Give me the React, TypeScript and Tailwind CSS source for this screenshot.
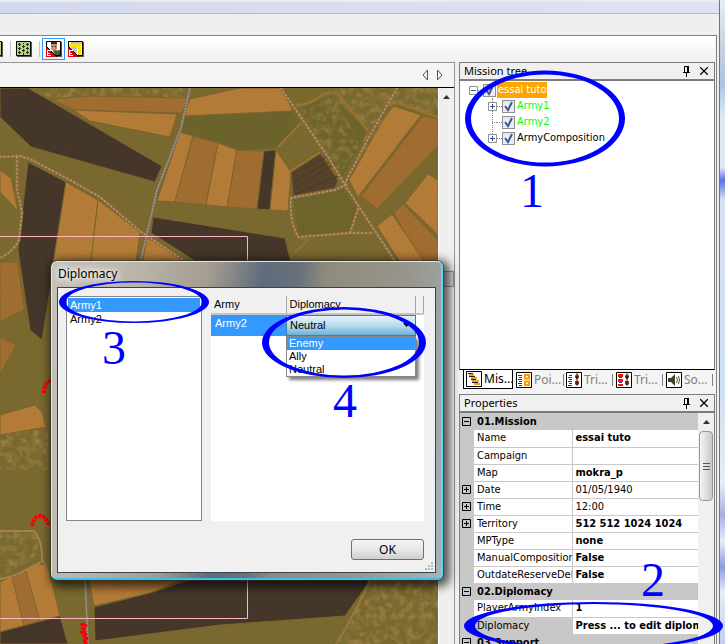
import type { ReactNode } from "react";
import { X } from "lucide-react";

const SANS = "font-['Noto_Sans','Open_Sans',sans-serif]";
const TAHOMA = "font-['DejaVu_Sans_Condensed','DejaVu_Sans',sans-serif] [font-stretch:condensed]";
const ARIAL = "font-['Liberation_Sans',Arial,sans-serif]";

type Row = {
  name: string;
  value?: string;
  group?: boolean;
  expandable?: boolean;
  plain?: boolean;
  active?: boolean;
};

const rows: Row[] = [
  { name: "01.Mission", group: true },
  { name: "Name", value: "essai tuto" },
  { name: "Campaign", value: "" },
  { name: "Map", value: "mokra_p" },
  { name: "Date", value: "01/05/1940", expandable: true, plain: true },
  { name: "Time", value: "12:00", expandable: true, plain: true },
  { name: "Territory", value: "512 512 1024 1024", expandable: true },
  { name: "MPType", value: "none" },
  { name: "ManualComposition", value: "False" },
  { name: "OutdateReserveDelay", value: "False" },
  { name: "02.Diplomacy", group: true },
  { name: "PlayerArmyIndex", value: "1" },
  { name: "Diplomacy", value: "Press ... to edit diplomacy", active: true },
  { name: "03.Support", group: true },
];

const BROWN = "#43352a";
const ORANGE = "#b67d39";
const OCHRE = "#a26e31";
const OLIVE = "#7a6a30";

const fields: [string, string][] = [
  ["0,88 28,88 162,166 155,182 31,147 0,117", BROWN],
  ["28,162 66,182 50,290 42,340 30,330 18,250", BROWN],
  ["52,99 90,96 188,98 182,113 73,110", OCHRE],
  ["73,110 177,114 170,137 90,121", ORANGE],
  ["190,99 240,88 282,88 293,111 183,116", ORANGE],
  ["180,132 193,136 175,202 157,201", ORANGE],
  ["193,136 218,143 206,205 175,202", OCHRE],
  ["218,143 237,150 227,207 206,205", ORANGE],
  ["237,150 264,151 257,209 227,207", OCHRE],
  ["264,151 276,150 270,210 257,209", BROWN],
  ["276,150 291,172 288,211 270,210", ORANGE],
  ["153,217 285,238 300,300 200,264 151,233", BROWN],
  ["66,182 98,200 90,270 52,270", ORANGE],
  ["98,200 140,232 135,270 90,270", ORANGE],
  ["147,238 185,258 180,270 141,270", ORANGE],
  ["0,170 11,178 18,211 0,192", ORANGE],
  ["0,262 18,262 24,310 0,322", OCHRE],
  ["291,171 320,153 338,180 335,188 293,196", "#54412a"],
  ["394,106 421,115 358,197 349,180 384,118", ORANGE],
  ["423,116 438,119 438,146 377,209 361,196", OCHRE],
  ["428,174 438,180 438,235 405,203", ORANGE],
  ["403,204 438,240 438,270 425,270 394,213", OCHRE],
  ["392,214 430,270 405,270 377,226", ORANGE],
  ["0,337 16,345 0,375", OCHRE],
  ["0,415 35,405 42,412 46,427 0,435", ORANGE],
  ["0,582 35,563 48,566 60,616 0,632", ORANGE],
  ["12,577 26,571 40,621 24,626", OCHRE],
  ["0,632 60,616 68,644 0,644", BROWN],
  ["88,575 195,575 150,593 94,606", ORANGE],
  ["94,607 150,593 195,578 372,578 345,616 220,625 95,641", BROWN],
];

function TerrainMap() {
  return (
    <svg
      className="absolute inset-0 size-full"
      viewBox="0 88 438 556"
      preserveAspectRatio="xMinYMin slice"
      role="img"
      aria-label="Terrain map"
    >
      <defs>
        <filter id="grain" x="0" y="0" width="100%" height="100%">
          <feTurbulence type="fractalNoise" baseFrequency="0.5" numOctaves="2" seed="4" />
          <feColorMatrix values="0 0 0 0 0.15  0 0 0 0 0.1  0 0 0 0 0.02  1.2 0 0 0 -0.45" />
        </filter>
        <filter id="leaves" x="0" y="0" width="100%" height="100%">
          <feTurbulence type="fractalNoise" baseFrequency="0.15" numOctaves="3" seed="9" />
          <feColorMatrix values="0 0 0 0 0.64  0 0 0 0 0.38  0 0 0 0 0.14  0 2 0 0 -0.8" result="n" />
          <feComposite in="n" in2="SourceGraphic" operator="in" />
        </filter>
      </defs>
      <rect y="88" width="438" height="556" fill={OLIVE} />
      <path d="M300 108l30-12 38 35-25 45-43-68zM293 197l50-8 14 20-8 22-50 6z" fill="#6d642c" />
      <g filter="url(#leaves)" opacity="0.45">
        <path d="M335 88h103v28l-42-12-30 52-32-60zM300 108l40 66 30-45-38-33zM372 578h66v66H336zM0 430h48v40H0z" />
        <path d="M28 88h155v10H50zM0 530h38v25L0 578z" />
      </g>
      <path d="M183 116l110-5 7 12-22 24-42 3-56-18z" fill="#6c642d" />
      {fields.map(([points, fill]) => (
        <polygon key={points} points={points} fill={fill} stroke="#7d652d" strokeWidth="1" />
      ))}
      <path
        d="M295 188l40-24M296 194l42-18M293 181l38-20M301 170l24-12"
        stroke="#473724"
        strokeWidth="1"
      />
      <g fill="none" strokeLinejoin="round" strokeLinecap="round">
        <path
          d="M297 105q12 0 22-8 12-8 20-2l29 36M278 147l22-23M291 171l28-18M398 103l40 14"
          stroke="#9a7431"
          strokeWidth="2.5"
        />
        <path
          d="M0 157l20-1 10 3 40 21 30 17 40 34 50 34M17 157v33l5 22-3 28q-6 12-19 18M281 88l49 72 15 25 22 34 32 48M397 88l-27 47-25 48M291 198l44-8 12-6M291 198q-2 22 7 39l52-4 22 0M358 209l-8 24M298 237l10 3-12 12"
          stroke="#8f6c3b"
          strokeWidth="3"
        />
        <path
          d="M0 157l20-1 10 3 40 21 30 17 40 34 50 34M17 157v33l5 22-3 28q-6 12-19 18M281 88l49 72 15 25 22 34 32 48M397 88l-27 47-25 48M291 198l44-8 12-6M291 198q-2 22 7 39l52-4 22 0M358 209l-8 24"
          stroke="#c0987a"
          strokeWidth="1.5"
          strokeDasharray="1 3"
        />
        <path d="M190 88l-9 40-24 62-17 74M85 578l3 66" stroke="#7b6c56" strokeWidth="3" />
        <path d="M190 88l-9 40-24 62-17 74M85 578l3 66" stroke="#a3998e" strokeWidth="1.5" strokeDasharray="1 2" />
        <path
          d="M0 531l34 0q8 8 8 28l6 12M42 561q-20 14-42 18M370 580q-16 36-34 64"
          stroke="#9d7744"
          strokeWidth="2"
        />
        <path d="M0 531l34 0q8 8 8 28M42 561q-20 14-42 18" stroke="#c39b75" strokeDasharray="1 2" />
      </g>
      <rect y="88" width="438" height="556" filter="url(#grain)" opacity="0.25" />
      <path d="M0 236.5h247.5v382H0" fill="none" stroke="#ffb6c1" />
      <g fill="none" stroke="#f00" strokeWidth="4" strokeDasharray="3 1">
        <path d="M44 393q0-8 4-11l6-3M32 526q2-10 8-10 5 0 8 7l6 0M82 623l4 21M86 624l-4 8 5 4-3 8" />
      </g>
    </svg>
  );
}

function ForestIcon() {
  return (
    <svg width="16" height="16" viewBox="0 0 16 16" aria-hidden="true">
      <path d="M1 1h15v15H1z" fill="#555" />
      <path d="M.5.5h14v14H.5z" fill="#b9cf8b" stroke="#000" />
      <path
        d="M3 2h1v3H3zM2 3h3v1H2zM7 4h1v3H7zM6 5h3v1H6zM11 2h1v3h-1zM10 3h3v1h-3zM3 6h1v3H3zM2 7h3v1H2zM11 6h1v3h-1zM10 7h3v1h-3zM7 8h1v3H7zM6 9h3v1H6zM3 10h1v3H3zM2 11h3v1H2zM11 10h1v3h-1zM10 11h3v1h-3zM7 12h1v2H7zM7 2h1v1H7z"
        fill="#21330f"
      />
    </svg>
  );
}

function EditorIcon({ road = false }: { road?: boolean }) {
  return (
    <svg width="16" height="16" viewBox="0 0 16 16" aria-hidden="true">
      <path d="M1 1h15v15H1z" fill="#555" />
      <path d="M.5.5h14v14H.5z" fill="#fff" stroke="#000" />
      {road ? (
        <>
          <path d="M3 1h11v2H3zM3 6h6v6H3z" fill="#c4c4c4" />
          <path d="M1 4.500h10.500V14" fill="none" stroke="#ffe100" strokeWidth="3" />
        </>
      ) : (
        <>
          <path d="M5 1h6v3H5z" fill="#4b2412" />
          <path d="M5 3h6v5L9 10H7L5 8z" fill="#c88f66" />
          <path d="M6 5h1v1H6zM9 5h1v1H9z" fill="#301408" />
          <path d="M7 10l3-1 4 2v3H9z" fill="#40613c" />
          <path d="M12 9h2v2h-2z" fill="#c22" />
        </>
      )}
      <path d="M0 5l11 11H0z" fill="#e00012" />
      <path d="M0 5l11 11" stroke="#000" />
      <path d="M1 9h4v1H2v2h2v1H2v1h3v1H1z" fill="#fff" />
    </svg>
  );
}

function TabIcon({ kind }: { kind: string }) {
  return (
    <svg className="shrink-0" width="16" height="16" viewBox="0 0 16 16" aria-hidden="true">
      <path d="M.5.5h15v15H.5z" fill="#fff" stroke="#000" />
      {kind === "tree" && (
        <>
          <path d="M3 4h5M5 7h6M6 10h7M8 13h6" stroke="#f59a23" strokeWidth="2" />
          <path d="M2 2.500h5M3 5.500h6M5 8.500h5M6 11.500h6" stroke="#222" />
        </>
      )}
      {kind === "points" && (
        <>
          <path d="M2 3.500h4M3 5.500h3M2 7.500h4M3 9.500h3M2 11.500h4M3 13.500h3" stroke="#333" />
          <path d="M9 3h4v3.500H9zM9 9.500h4V13H9z" fill="#fff" stroke="#f90" strokeWidth="2" />
        </>
      )}
      {(kind === "triggers" || kind === "conditions") && (
        <>
          {kind === "triggers" ? (
            <path d="M3 3.500h3M2 5.500h4M3 7.500h3M2 9.500h4M3 11.500h3M2 13.500h4" stroke="#333" />
          ) : (
            <>
              <path d="M2 2h5v3H2zM2 7h5v3H2zM2 12h5v2H2z" fill="#f01414" />
              <path d="M3 5.500h3M3 10.500h3" stroke="#33c" />
            </>
          )}
          <path d="M11 1l2 3-1 3h-2L9 4zM9 9h4v3l-2 2-2-2z" fill="#8a3815" />
          <path d="M11 4v9M9 5h4" stroke="#301208" />
        </>
      )}
      {kind === "sound" && (
        <>
          <path d="M2 6h3l4-4v12l-4-4H2z" fill="#374528" />
          <path d="M10.500 5q2 3 0 6M12.500 4q2 4 0 8" fill="none" stroke="#555" />
        </>
      )}
    </svg>
  );
}

function PanelHeader({ title }: { title: string }) {
  return (
    <div className="flex h-[19px] shrink-0 items-center border border-b-2 border-[#7d7d7d] bg-[#f0f0f0] pl-1 pr-[3px]">
      <h2 className={`${SANS} flex-1 text-[11px] leading-4`}>{title}</h2>
      <button type="button" aria-label={`Pin ${title}`} className="mr-1.5">
        <svg width="9" height="12" viewBox="0 0 9 12">
          <path d="M2.500 7V1.500h4V7M1 7.500h7M4.500 8v4" stroke="#000" fill="none" />
          <path d="M5 1h2v6H5z" />
        </svg>
      </button>
      <button type="button" aria-label={`Close ${title}`}>
        <X size={14} strokeWidth={2} />
      </button>
    </div>
  );
}

function Expander({ open = false, soft = false }: { open?: boolean; soft?: boolean }) {
  return (
    <svg width="9" height="9" viewBox="0 0 9 9" aria-hidden="true" className="block shrink-0">
      <path d="M.5.5h8v8h-8z" fill={soft ? "#fff" : "none"} stroke={soft ? "#919191" : "#000"} />
      <path d={open ? "M2 4.500h5" : "M2 4.500h5M4.500 2v5"} stroke={soft ? "#3d4f91" : "#000"} />
    </svg>
  );
}

function TreeItem({ children, className, expander }: { children: string; className: string; expander: ReactNode }) {
  return (
    <label className="flex h-4 items-center">
      <span className="w-[9px] shrink-0">{expander}</span>
      <span className="w-[5px] shrink-0 border-t border-dotted border-[#888]" />
      <span className="relative size-[13px] shrink-0">
        <input
          type="checkbox"
          defaultChecked
          className="block size-[13px] appearance-none border border-[#8e8f8f] bg-[#e9edf2]"
        />
        <svg className="pointer-events-none absolute inset-0" width="13" height="13" viewBox="0 0 13 13">
          <path d="M3 6l3 4 4-8" fill="none" stroke="#3f559b" strokeWidth="2" />
        </svg>
      </span>
      <span className={`ml-px px-px leading-4 ${className}`}>{children}</span>
    </label>
  );
}

function MissionTree() {
  return (
    <div
      className={`${TAHOMA} flex-1 border-x border-b border-[#7d7d7d] border-b-black bg-white pl-[9px] pt-px text-[11px]`}
    >
      <TreeItem expander={<Expander open soft />} className="bg-[#ffa500] text-white">
        essai tuto
      </TreeItem>
      <div className="relative ml-[19px]">
        <span className="absolute left-1 top-0 h-10 border-l border-dotted border-[#888]" />
        <div className="relative">
          <TreeItem expander={<Expander soft />} className="text-[#0f0]">
            Army1
          </TreeItem>
          <TreeItem
            expander={<span className="ml-1 block border-t border-dotted border-[#888]" />}
            className="text-[#0f0]"
          >
            Army2
          </TreeItem>
          <TreeItem expander={<Expander soft />} className="text-black">
            ArmyComposition
          </TreeItem>
        </div>
      </div>
    </div>
  );
}

function PanelTabs() {
  const tabs = [
    { label: "Mis...", kind: "tree" },
    { label: "Poi...", kind: "points" },
    { label: "Tri...", kind: "triggers" },
    { label: "Tri...", kind: "conditions" },
    { label: "So...", kind: "sound" },
  ];
  return (
    <div role="tablist" className={`${SANS} flex h-[24px] shrink-0 bg-[#f4f4f4] pl-1 text-xs text-[#808080]`}>
      {tabs.map((tab, i) => (
        <button
          key={tab.kind}
          type="button"
          role="tab"
          aria-selected={i === 0}
          className={
            i === 0
              ? "flex h-[19px] w-[50px] items-center gap-0.5 border border-t-0 border-black bg-white pl-0.5 text-black"
              : "flex h-[19px] w-[50px] items-center gap-0.5 pl-[3px]"
          }
        >
          <TabIcon kind={tab.kind} />
          <span className="flex-1 text-left">{tab.label}</span>
          {i > 0 && <span className="h-3 border-l border-[#808080]" />}
        </button>
      ))}
    </div>
  );
}

function ScrollArrow() {
  return (
    <svg className="mx-auto block" width="7" height="4" viewBox="0 0 7 4" aria-hidden="true">
      <path d="M3.500 0L7 4H0z" fill="#333" />
    </svg>
  );
}

function Properties() {
  return (
    <div className="flex min-h-0 flex-1 overflow-hidden border-x border-[#7d7d7d]">
      <table className={`${TAHOMA} w-full flex-1 table-fixed border-collapse self-start text-[11px] leading-4`}>
        <colgroup>
          <col className="w-[14px]" />
          <col className="w-[98px]" />
          <col />
        </colgroup>
        <tbody>
          {rows.map((row) =>
            row.group ? (
              <tr key={row.name} className="h-[17px] bg-[#c8c8c8]">
                <td className="p-0 pl-0.5">
                  <Expander open />
                </td>
                <th colSpan={2} className="p-0 pl-[3px] text-left font-bold">
                  {row.name}
                </th>
              </tr>
            ) : (
              <tr key={row.name} className="h-[17px] bg-white">
                <td className="bg-[#c8c8c8] p-0 pl-0.5">{row.expandable && <Expander />}</td>
                <th
                  className={`overflow-hidden whitespace-nowrap border-b border-r border-[#c8c8c8] p-0 pl-[3px] text-left font-normal ${row.active ? "bg-[#c8c8c8]" : ""}`}
                >
                  {row.name}
                </th>
                <td
                  className={`overflow-hidden whitespace-nowrap border-b border-[#c8c8c8] p-0 pl-[3px] ${row.plain ? "" : "font-bold"}`}
                >
                  {row.value}
                </td>
              </tr>
            ),
          )}
        </tbody>
      </table>
      <div className="w-4 shrink-0 bg-[#f0f0f0] pt-[7px]">
        <ScrollArrow />
        <div className="mx-px mt-[7px] flex h-[70px] flex-col items-center justify-center gap-0.5 rounded-sm border border-[#979797] bg-linear-to-r from-[#f5f5f5] to-[#c9c9cb]">
          <span className="h-px w-[7px] bg-[#555]" />
          <span className="h-px w-[7px] bg-[#555]" />
          <span className="h-px w-[7px] bg-[#555]" />
        </div>
      </div>
    </div>
  );
}

function DiplomacyDialog() {
  return (
    <section
      role="dialog"
      aria-labelledby="dialog-title"
      className={`${ARIAL} absolute left-[51px] top-[261px] flex h-[319px] w-[392px] flex-col rounded-md border border-b-2 border-r-2 border-[#e2e6e4] border-b-[#3cc0e6] border-r-[#5ad8f5] bg-[linear-gradient(100deg,#c5c2ba_0%,#b9b4a8_20%,#a39c90_36%,#5f6b7c_48%,#67717a_56%,#8d8c7c_62%,#97958c_80%,#a3b4bd_100%)] px-[5px] pb-[5px] text-[11px] shadow-[3px_3px_10px_4px_rgba(0,0,0,0.65)] outline outline-[#333]/60`}
    >
      <h2
        id="dialog-title"
        className={`${SANS} h-[25px] pl-px text-xs leading-6 [text-shadow:0_0_6px_#fff,0_0_8px_#fff,0_0_10px_#fff]`}
      >
        Diplomacy
      </h2>
      <div className="relative flex flex-1 flex-col border border-[#3c4248] bg-[#f0f0f0] pb-3 pl-2 pr-[11px] pt-2">
        <div className="flex flex-1 gap-[9px]">
          <ul
            role="listbox"
            aria-label="Armies"
            className="w-[136px] border border-[#828790] bg-white p-px leading-[14px]"
          >
            <li role="option" aria-selected="true" className="bg-[#3399ff] pl-0.5 text-white">
              Army1
            </li>
            <li role="option" aria-selected="false" className="pl-0.5">
              Army2
            </li>
          </ul>
          <div className="flex-1 bg-white">
            <table className="w-full table-fixed border-collapse">
              <colgroup>
                <col className="w-[75px]" />
                <col />
                <col className="w-2" />
              </colgroup>
              <thead>
                <tr className="h-[18px] border-b-2 border-b-[#c4c4c4] bg-[#f0f0f0] text-left">
                  <th className="border-r border-[#a6a6a6] p-0 pl-[3px] font-normal">Army</th>
                  <th className="border-r border-[#a6a6a6] p-0 pl-[3px] font-normal">Diplomacy</th>
                  <th className="border-r border-[#a6a6a6] p-0" />
                </tr>
              </thead>
              <tbody>
                <tr className="h-5 align-top">
                  <td className="bg-[#3399ff] p-0 pl-1 leading-4 text-white">Army2</td>
                  <td className="relative p-0">
                    <select
                      aria-label="Diplomacy"
                      defaultValue="Neutral"
                      className="block h-[21px] w-full appearance-none border border-[#3c7fb1] bg-linear-to-b from-[#e5f2f9] via-[#b9dbee] to-[#6fb0d6] pl-[3px] pr-4"
                    >
                      <option>Enemy</option>
                      <option>Ally</option>
                      <option>Neutral</option>
                    </select>
                    <svg className="pointer-events-none absolute right-1.5 top-2" width="7" height="4" viewBox="0 0 7 4">
                      <path d="M0 0h7L3.500 4z" />
                    </svg>
                    <ul
                      role="listbox"
                      aria-label="Diplomacy choices"
                      className="absolute inset-x-0 top-[21px] border border-[#888] bg-white leading-[13px] shadow-[3px_3px_3px_rgba(0,0,0,0.5)]"
                    >
                      <li role="option" aria-selected="true" className="bg-[#3399ff] pl-0.5 text-white">
                        Enemy
                      </li>
                      <li role="option" aria-selected="false" className="pl-0.5">
                        Ally
                      </li>
                      <li role="option" aria-selected="false" className="pl-0.5">
                        Neutral
                      </li>
                    </ul>
                  </td>
                  <td />
                </tr>
              </tbody>
            </table>
          </div>
        </div>
        <button
          type="button"
          className={`${SANS} mt-[18px] h-[21px] w-[73px] self-end rounded-[3px] border border-[#707070] bg-linear-to-b from-[#f4f4f4] via-[#e8e8e8] to-[#cfcfcf] text-xs leading-4`}
        >
          OK
        </button>
        <svg className="absolute bottom-px right-px" width="9" height="9" viewBox="0 0 9 9" aria-hidden="true">
          <path d="M6 0h2v2H6zM3 3h2v2H3zM6 3h2v2H6zM0 6h2v2H0zM3 6h2v2H3zM6 6h2v2H6z" fill="#b8b8b8" />
        </svg>
      </div>
    </section>
  );
}

// outer and inner ellipse joined, so the stroke swells at both sides
function Callouts() {
  const number = "absolute font-['Liberation_Serif',serif] text-5xl leading-none text-[#00f]";
  return (
    <div className="pointer-events-none absolute inset-0 overflow-hidden">
      <svg className="absolute left-0 top-0" width="725" height="644" viewBox="0 0 725 644" aria-hidden="true">
        <g fill="#00f" fillRule="evenodd">
          <path d="M465 118.500a80 48 0 1 0 160 0a80 48 0 1 0-160 0zM471 118.500a74 44 0 1 0 148 0a74 44 0 1 0-148 0z" />
          <path d="M464 626a129.500 24 0 1 0 259 0a129.500 24 0 1 0-259 0zM475 626a119 22 0 1 0 238 0a119 22 0 1 0-238 0z" />
          <path d="M59 302a75 21 0 1 0 150 0a75 21 0 1 0-150 0zM66 302a68 19.500 0 1 0 136 0a68 19.500 0 1 0-136 0z" />
          <path d="M262 342.500a82 35.500 0 1 0 164 0a82 35.500 0 1 0-164 0zM269 342.500a75 33 0 1 0 150 0a75 33 0 1 0-150 0z" />
        </g>
      </svg>
      <span className={`${number} left-[520px] top-[167px]`}>1</span>
      <span className={`${number} left-[641px] top-[556px]`}>2</span>
      <span className={`${number} left-[102px] top-[324px]`}>3</span>
      <span className={`${number} left-[333px] top-[377px]`}>4</span>
    </div>
  );
}

export default function App() {
  return (
    <div className="relative flex h-screen overflow-hidden bg-[#f0f0f0] text-black">
      <div className="flex min-w-0 flex-1 flex-col border-r border-[#6f7480]">
        <div className="h-[14px] shrink-0 border-b border-t-2 border-b-[#b5b9c9] border-t-[#e6edf5] bg-linear-to-r from-[#d3d9ec] to-[#dfe2f3]" />
        <div className="mr-0.5 h-[22px] shrink-0 border-b border-[#7f828c] bg-[#efefef]" />
        <div className="mr-0.5 flex min-h-0 flex-1 flex-col border-r border-[#7f828c] pr-px">
          <div role="toolbar" className="flex h-[26px] shrink-0 items-center bg-linear-to-b from-white to-[#f0f0f0]">
            <button type="button" aria-label="Terrain" className="-ml-[13px]">
              <ForestIcon />
            </button>
            <span className="ml-[7px] h-4 border-l border-[#c5c5c5]" />
            <button type="button" aria-label="Forest" className="ml-[5px]">
              <ForestIcon />
            </button>
            <span className="ml-[7px] h-4 border-l border-[#c5c5c5]" />
            <button
              type="button"
              aria-label="Edit units"
              className="ml-0.5 flex h-[22px] w-[23px] items-center justify-center border border-[#3399ff]"
            >
              <EditorIcon />
            </button>
            <button type="button" aria-label="Edit roads" className="ml-[3px]">
              <EditorIcon road />
            </button>
          </div>
          <div className="flex min-h-0 flex-1 gap-1">
            <main className="flex min-w-0 flex-1 flex-col border-r border-t border-[#969696]">
              <div className="flex h-[25px] shrink-0 items-center justify-end gap-[9px] border-b border-black bg-[#f4f4f4] pr-[11px]">
                <button type="button" aria-label="Previous tab">
                  <svg width="6" height="12" viewBox="0 0 6 12">
                    <path d="M5.500 1v10L1 6z" fill="none" stroke="#555" />
                  </svg>
                </button>
                <button type="button" aria-label="Next tab">
                  <svg width="6" height="12" viewBox="0 0 6 12">
                    <path d="M.5 1v10L5 6z" fill="none" stroke="#555" />
                  </svg>
                </button>
              </div>
              <div className="flex min-h-0 flex-1">
                <div className="relative flex-1 overflow-hidden">
                  <TerrainMap />
                </div>
                <div className="w-4 shrink-0 border-l border-white bg-[#efefef] pt-[7px]">
                  <ScrollArrow />
                  <div className="mt-[172px] h-4 border border-[#979797] bg-[#dcdcdc]" />
                </div>
              </div>
            </main>
            <aside className="flex w-[256px] shrink-0 flex-col">
              <div className="flex h-[332px] shrink-0 flex-col">
                <PanelHeader title="Mission tree" />
                <MissionTree />
                <PanelTabs />
              </div>
              <PanelHeader title="Properties" />
              <Properties />
            </aside>
          </div>
        </div>
      </div>
      <div className="w-[5px] shrink-0 bg-[linear-gradient(to_bottom,#e6edf5_0%,#c3d0dc_8%,#a9c4e2_13%,#dce8f4_18%,#dfe9f4_26%,#5a6ee8_28%,#d5e2f0_31%,#cfe0f0_60%,#e6eef6_75%,#a4aee4_80%,#e6eef6_84%,#8f9be0_88%,#e6eef6_92%,#c4cdec_100%)]" />
      <DiplomacyDialog />
      <Callouts />
    </div>
  );
}
